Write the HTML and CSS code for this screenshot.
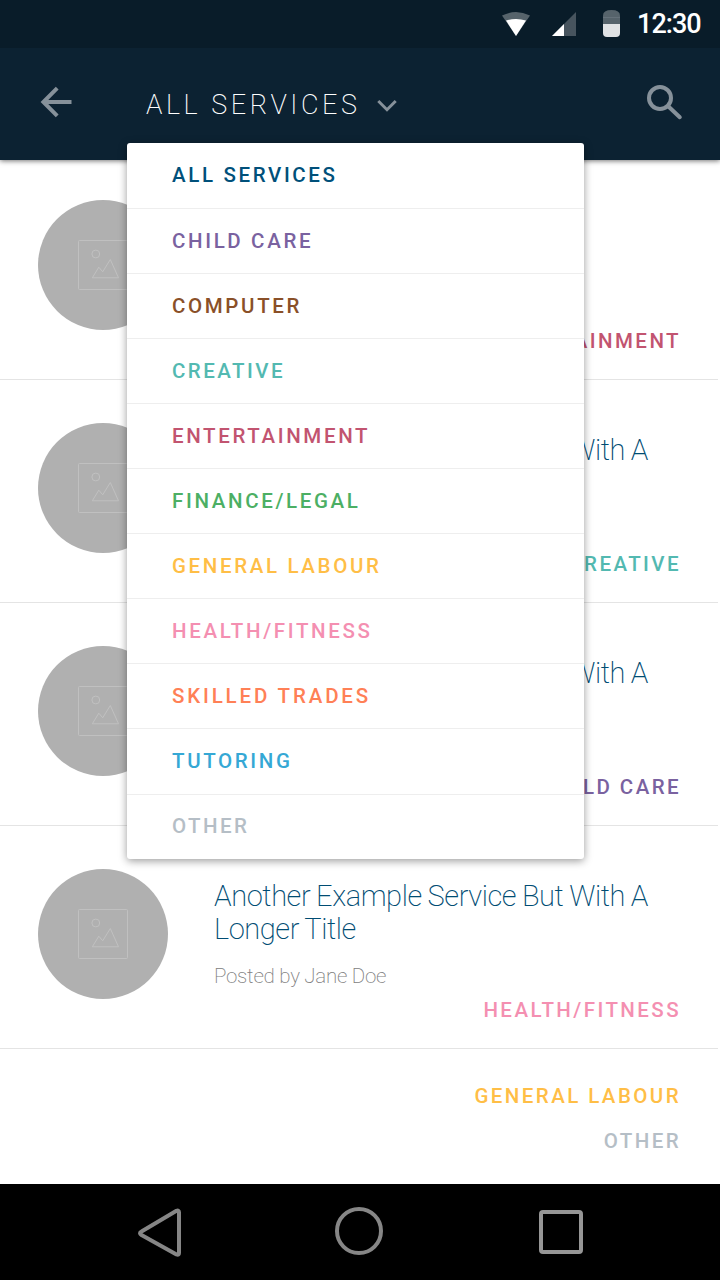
FILE: index.html
```html
<!DOCTYPE html>
<html lang="en">
<head>
<meta charset="utf-8">
<title>All Services</title>
<link rel="stylesheet" href="styles.css">
</head>
<body>
<svg class="defs" width="0" height="0">
  <symbol id="picture" viewBox="0 0 130 130">
    <g fill="none" stroke="#c0c0c0" stroke-width="1">
      <rect x="40.5" y="40.5" width="49" height="49" rx="1"/>
      <circle cx="57.8" cy="54" r="3.9"/>
      <path d="M54.3 77.8L60.8 67.2L64.7 71.8L72.3 59.5L80.5 77.8Z"/>
    </g>
  </symbol>
</svg>
<div class="screen">
  <header class="top">
    <div class="status">
      <svg class="status-icons" width="140" height="48" viewBox="0 0 140 48">
        <path fill="#56636b" d="M22 15.6Q36 8.6 50 15.6L36 36Z"/>
        <path fill="#fff" d="M26 20.6Q36 17.4 46 20.6L36 36Z"/>
        <path fill="#47545e" d="M96 12V36H72Z"/>
        <path fill="#fff" d="M84 24V36H72Z"/>
        <path fill="#56636b" d="M123 24V15.5Q123 10 131.500 10Q140 10 140 15.500V24Z"/>
        <path fill="#65717a" d="M123 17H140V18H123Z"/>
        <path fill="#e0e2e4" d="M123 24H140V33Q140 37 136 37H127Q123 37 123 33Z"/>
      </svg>
      <span class="clock">12:30</span>
    </div>
    <div class="bar">
      <svg class="back" width="32" height="32" viewBox="0 0 32 32"><path fill="none" stroke="#86919a" stroke-width="4" d="M31.500 16H4M17.200 2.200L3.400 16L17.200 29.800"/></svg>
      <h1 class="heading">ALL SERVICES</h1>
      <svg class="chevron" width="20" height="14" viewBox="0 0 20 14"><path fill="none" stroke="#86919a" stroke-width="3" d="M1.300 2L10 10.700L18.700 2"/></svg>
      <svg class="search" width="38" height="38" viewBox="0 0 38 38"><g fill="none" stroke="#86919a" stroke-width="4"><circle cx="14" cy="14" r="11"/><path stroke-linecap="round" d="M23 23L33.800 33.200"/></g></svg>
    </div>
    <nav class="menu">
      <a class="item all">ALL SERVICES</a>
      <a class="item child">CHILD CARE</a>
      <a class="item computer">COMPUTER</a>
      <a class="item creative">CREATIVE</a>
      <a class="item entertainment">ENTERTAINMENT</a>
      <a class="item finance">FINANCE/LEGAL</a>
      <a class="item labour">GENERAL LABOUR</a>
      <a class="item health">HEALTH/FITNESS</a>
      <a class="item trades">SKILLED TRADES</a>
      <a class="item tutoring">TUTORING</a>
      <a class="item other">OTHER</a>
    </nav>
  </header>
  <main class="list">
    <article class="card">
      <svg class="avatar"><use href="#picture"/></svg>
      <div class="info"><span class="tag entertainment">ENTERTAINMENT</span></div>
    </article>
    <article class="card">
      <svg class="avatar"><use href="#picture"/></svg>
      <div class="info"><h2 class="title">Another Example Service But With A</h2><span class="tag creative">CREATIVE</span></div>
    </article>
    <article class="card">
      <svg class="avatar"><use href="#picture"/></svg>
      <div class="info"><h2 class="title">Another Example Service But With A</h2><span class="tag child">CHILD CARE</span></div>
    </article>
    <article class="card">
      <svg class="avatar"><use href="#picture"/></svg>
      <div class="info"><h2 class="title">Another Example Service But With A<br>Longer Title</h2><p class="by">Posted by Jane Doe</p><span class="tag health">HEALTH/FITNESS</span></div>
    </article>
    <div class="extra">
      <span class="tag labour">GENERAL LABOUR</span>
      <span class="tag other">OTHER</span>
    </div>
  </main>
  <footer class="keys">
    <svg width="48" height="52" viewBox="0 0 48 52"><path fill="none" stroke="#868686" stroke-width="4" stroke-linejoin="round" d="M42 5.500V46Q42 48.500 39.500 47.500L4.500 28Q1.500 26 4.500 24.500L39.500 3.800Q42 3 42 5.500Z"/></svg>
    <svg width="48" height="48" viewBox="0 0 48 48"><circle cx="24" cy="24" r="22" fill="none" stroke="#868686" stroke-width="4"/></svg>
    <svg width="44" height="44" viewBox="0 0 44 44"><rect x="2" y="2" width="40" height="40" rx="2" fill="none" stroke="#969696" stroke-width="4"/></svg>
  </footer>
</div>
</body>
</html>
```
FILE: styles.css
```css
* { box-sizing: border-box; }
body { margin: 0; font-family: Roboto, sans-serif; background: #fff; }
.defs { display: block; position: absolute; }
.screen { display: flex; flex-direction: column; width: 720px; height: 1280px; overflow: hidden; }
.top { position: relative; z-index: 1; flex: none; height: 160px; background: #0c2232; box-shadow: 0 1px 5px rgba(0,0,0,.55); }
.status { display: flex; height: 48px; padding-left: 480px; background: #091c29; }
.clock { margin-left: 17px; font-size: 27px; font-weight: 500; line-height: 48px; letter-spacing: -.95px; color: #fff; white-space: nowrap; }
.bar { display: flex; align-items: flex-start; height: 112px; padding: 0 36px 0 40px; }
.back { margin-top: 38px; }
.heading { width: 218px; margin: 40px 0 0 74px; font-size: 27px; font-weight: 200; line-height: 34px; letter-spacing: 3.55px; color: #fff; white-space: nowrap; }
.chevron { margin: 51px 0 0 13px; }
.search { margin: 36px 0 0 auto; }
.menu { position: absolute; left: 127px; top: 143px; width: 457px; height: 716px; background: #fff; border-radius: 3px; box-shadow: 0 2px 8px rgba(0,0,0,.4); }
.item { display: block; height: 65px; padding-left: 45px; border-bottom: 1px solid #eee; font-size: 20.5px; font-weight: 500; line-height: 64px; letter-spacing: 2.64px; white-space: nowrap; }
.item.trades { letter-spacing: 2.84px; }
.item.creative, .item.other { letter-spacing: 2.45px; }
.item:first-child, .item:nth-child(10) { height: 66px; }
.item:last-child { height: 64px; border: 0; line-height: 62px; }
.list { flex: none; height: 1024px; }
.card { display: flex; width: 718px; height: 223px; padding: 43px 36px 0 38px; border-bottom: 1px solid #e4e4e4; }
.card:first-child { height: 220px; padding-top: 40px; }
.avatar { flex: none; width: 130px; height: 130px; border-radius: 50%; background: #b0b0b0; }
.info { display: flex; flex: 1; flex-direction: column; height: 156px; padding: 11px 0 0 46px; }
.title { margin: 0; font-size: 29px; font-weight: 200; line-height: 33px; letter-spacing: -.42px; word-spacing: -.8px; color: #004c73; white-space: nowrap; }
.by { margin: 18px 0 0; font-size: 20.5px; font-weight: 200; line-height: 24px; letter-spacing: -.27px; color: #808080; }
.tag { align-self: flex-end; margin-right: 1px; font-size: 20.5px; font-weight: 500; line-height: 30px; letter-spacing: 2.43px; white-space: nowrap; }
.info .tag { margin-top: auto; }
.extra { display: flex; flex-direction: column; gap: 15px; padding: 32px 38px 0 0; }
.keys { display: flex; flex: none; align-items: flex-start; height: 96px; padding-left: 137px; background: #000; }
.keys svg:nth-child(1) { margin-top: 23px; }
.keys svg:nth-child(2) { margin: 23px 0 0 150px; }
.keys svg:nth-child(3) { margin: 26px 0 0 156px; }
.all { color: #00507a; }
.child { color: #7a62a0; }
.computer { color: #8a5028; }
.creative { color: #53b9b1; }
.entertainment { color: #c25470; }
.finance { color: #4caf64; }
.labour { color: #ffbe46; }
.health { color: #f48fb1; }
.trades { color: #ff8056; }
.tutoring { color: #35a8d5; }
.other { color: #b5bec6; }
```
